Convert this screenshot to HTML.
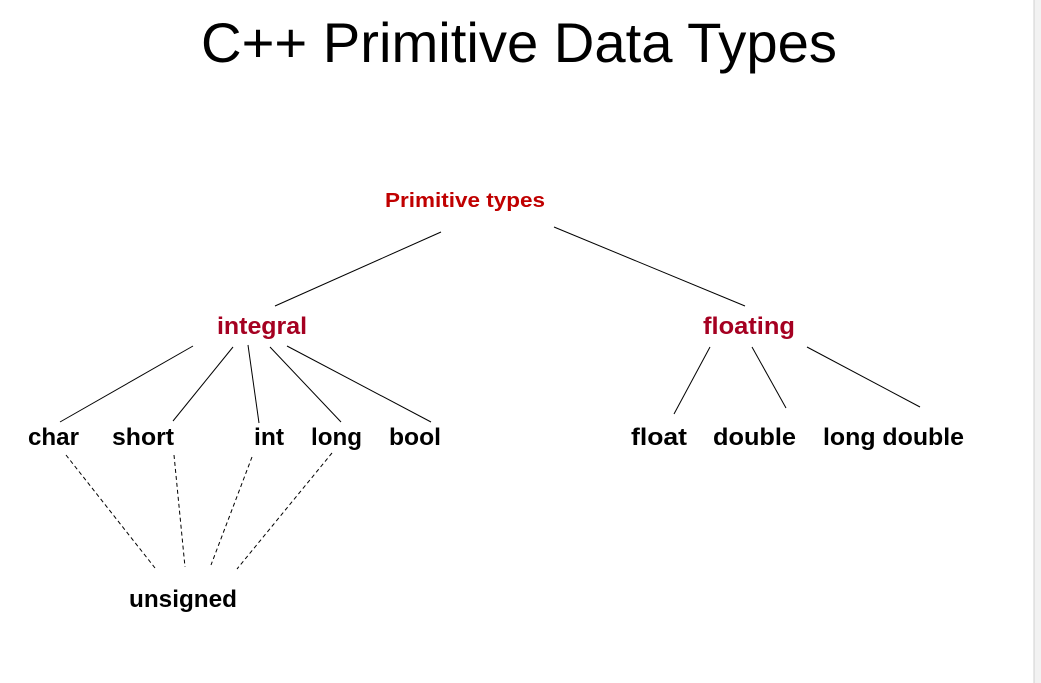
<!DOCTYPE html>
<html><head><style>
html,body{margin:0;padding:0;background:#fff;width:1041px;height:683px;overflow:hidden}
svg{display:block}
text{font-family:"Liberation Sans",sans-serif;font-weight:bold}
</style></head><body>
<svg width="1041" height="683" viewBox="0 0 1041 683">
<rect x="1034" y="0" width="7" height="683" fill="#f2f2f2"/>
<line x1="1034" y1="0" x2="1034" y2="683" stroke="#d0d0d0"/>
<text x="201" y="62" font-size="56" style="font-weight:normal" fill="#000" textLength="636" lengthAdjust="spacingAndGlyphs">C++ Primitive Data Types</text>
<text x="385" y="207" font-size="20" fill="#c00000" textLength="160" lengthAdjust="spacingAndGlyphs">Primitive types</text>
<text x="217" y="334" font-size="24" fill="#a50021" textLength="90" lengthAdjust="spacingAndGlyphs">integral</text>
<text x="703" y="334" font-size="24" fill="#a50021" textLength="92" lengthAdjust="spacingAndGlyphs">floating</text>
<g font-size="24" fill="#000">
<text x="28" y="445" textLength="51" lengthAdjust="spacingAndGlyphs">char</text>
<text x="112" y="445" textLength="62" lengthAdjust="spacingAndGlyphs">short</text>
<text x="254" y="445" textLength="30" lengthAdjust="spacingAndGlyphs">int</text>
<text x="311" y="445" textLength="51" lengthAdjust="spacingAndGlyphs">long</text>
<text x="389" y="445" textLength="52" lengthAdjust="spacingAndGlyphs">bool</text>
<text x="631" y="445" textLength="56" lengthAdjust="spacingAndGlyphs">float</text>
<text x="713" y="445" textLength="83" lengthAdjust="spacingAndGlyphs">double</text>
<text x="823" y="445" textLength="141" lengthAdjust="spacingAndGlyphs">long double</text>
<text x="129" y="607" textLength="108" lengthAdjust="spacingAndGlyphs">unsigned</text>
</g>
<g stroke="#000" stroke-width="1">
<line x1="441" y1="232" x2="275" y2="306"/>
<line x1="554" y1="227" x2="745" y2="306"/>
<line x1="193" y1="346" x2="60" y2="422"/>
<line x1="233" y1="347" x2="173" y2="421"/>
<line x1="248" y1="345" x2="259" y2="423"/>
<line x1="270" y1="347" x2="341" y2="422"/>
<line x1="287" y1="346" x2="431" y2="422"/>
<line x1="710" y1="347" x2="674" y2="414"/>
<line x1="752" y1="347" x2="786" y2="408"/>
<line x1="807" y1="347" x2="920" y2="407"/>
</g>
<g stroke="#000" stroke-width="1" stroke-dasharray="4,3">
<line x1="66" y1="455" x2="155" y2="568"/>
<line x1="174" y1="455" x2="185" y2="567"/>
<line x1="252" y1="457" x2="211" y2="565"/>
<line x1="332" y1="453" x2="237" y2="569"/>
</g>
</svg>
</body></html>
